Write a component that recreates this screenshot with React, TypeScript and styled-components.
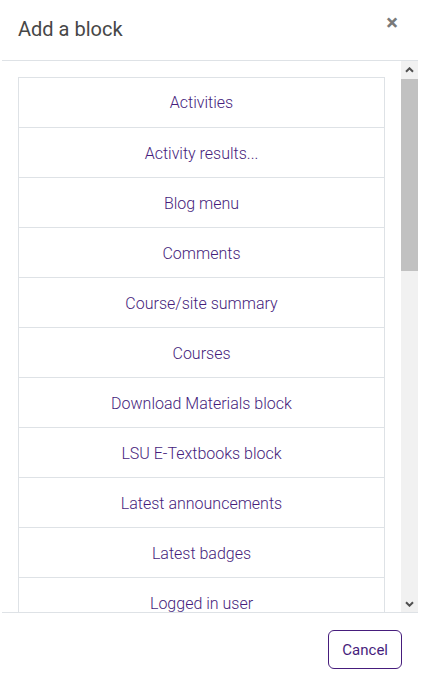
import styled, { createGlobalStyle } from 'styled-components';

// ── Page reset ─────────────────────────────────────────────────────────────
const GlobalStyle = createGlobalStyle`
  html, body {
    margin: 0;
    padding: 0;
    background: #fff;
  }
  body {
    font-family: Roboto, "Liberation Sans", Arial, sans-serif;
    overflow: hidden;
  }
  * {
    box-sizing: border-box;
  }
`;

const BLOCKS = [
  'Activities',
  'Activity results...',
  'Blog menu',
  'Comments',
  'Course/site summary',
  'Courses',
  'Download Materials block',
  'LSU E-Textbooks block',
  'Latest announcements',
  'Latest badges',
  'Logged in user',
  'Mentees',
  'Navigation',
  'Online users',
  'Private files',
  'Quickmail',
  'Random glossary entry',
  'Recent activity',
  'Recent blog entries',
  'Remote RSS feeds',
  'Search forums',
  'Section links',
  'Self completion',
  'Social activities',
  'Tags',
  'Text',
  'Turnitin',
  'Upcoming events',
  'YouTube',
];

// ── Modal shell ────────────────────────────────────────────────────────────
const Modal = styled.div`
  width: 416px;
  margin-left: 2px;
  display: flex;
  flex-direction: column;
  background: #fff;
`;

const Header = styled.div`
  height: 61px;
  padding: 17px 16px 0 16px;
  display: flex;
  align-items: flex-start;
  justify-content: space-between;
  border-bottom: 1px solid #dee2e6;
`;

const Title = styled.h5`
  margin: 0;
  font-size: 20px;
  line-height: 24px;
  font-weight: 400;
  color: #474747;
`;

const CloseButton = styled.button`
  border: 0;
  background: transparent;
  padding: 0;
  margin: -5px 4px 0 0;
  font-family: Roboto, "Liberation Sans", Arial, sans-serif;
  font-size: 22px;
  font-weight: 700;
  line-height: 1;
  color: #7a7a7a;
  cursor: pointer;
`;

// ── Body: list viewport + classic 17px scrollbar ───────────────────────────
const BodyFrame = styled.div`
  height: 551px;
  display: flex;
`;

const Viewport = styled.div`
  flex: 1;
  overflow: hidden;
  padding: 16px;
`;

const Scrollbar = styled.div`
  width: 17px;
  display: flex;
  flex-direction: column;
  background: #f1f1f1;
`;

const ScrollButton = styled.div`
  height: 17px;
  display: flex;
  align-items: center;
  justify-content: center;
  color: #505050;
`;

const ScrollTrack = styled.div`
  flex: 1;
  padding-top: 1px;
`;

const ScrollThumb = styled.div`
  height: 192px;
  background: #c1c1c1;
`;

const Arrow = ({ down }: { down?: boolean }) => (
  <svg width="9" height="6" viewBox="0 0 9 6" aria-hidden="true">
    <path
      d={down ? 'M1 1.2 L4.5 4.7 L8 1.2' : 'M1 4.8 L4.5 1.3 L8 4.8'}
      fill="none"
      stroke="currentColor"
      strokeWidth="2"
    />
  </svg>
);

const BlockList = styled.div`
  display: flex;
  flex-direction: column;
  border: 1px solid #dee2e6;
`;

const BlockRow = styled.a`
  display: block;
  flex-shrink: 0;
  height: 50px;
  padding: 14px 20px 0;
  border-top: 1px solid #dee2e6;
  font-size: 16px;
  font-weight: 300;
  line-height: 24px;
  text-align: center;
  color: #461d7c;
  text-decoration: none;
  white-space: nowrap;

  &:first-child {
    border-top: 0;
    height: 49px;
    padding-top: 13px;
  }
`;

// ── Footer ─────────────────────────────────────────────────────────────────
const Footer = styled.div`
  display: flex;
  justify-content: flex-end;
  padding: 17px 16px 16px;
  border-top: 1px solid #dee2e6;
`;

const SecondaryButton = styled.button`
  height: 39px;
  padding: 0 13px;
  border: 1px solid #461d7c;
  border-radius: 6px;
  background: #fff;
  font-family: Roboto, "Liberation Sans", Arial, sans-serif;
  font-size: 15px;
  font-weight: 400;
  line-height: 22px;
  color: #461d7c;
  cursor: pointer;
`;

export default function App() {
  return (
    <>
      <GlobalStyle />
      <Modal role="dialog" aria-label="Add a block">
        <Header>
          <Title>Add a block</Title>
          <CloseButton aria-label="Close">×</CloseButton>
        </Header>
        <BodyFrame>
          <Viewport>
            <BlockList>
              {BLOCKS.map((name) => (
                <BlockRow key={name} href="#">
                  {name}
                </BlockRow>
              ))}
            </BlockList>
          </Viewport>
          <Scrollbar aria-hidden="true">
            <ScrollButton>
              <Arrow />
            </ScrollButton>
            <ScrollTrack>
              <ScrollThumb />
            </ScrollTrack>
            <ScrollButton>
              <Arrow down />
            </ScrollButton>
          </Scrollbar>
        </BodyFrame>
        <Footer>
          <SecondaryButton>Cancel</SecondaryButton>
        </Footer>
      </Modal>
    </>
  );
}
